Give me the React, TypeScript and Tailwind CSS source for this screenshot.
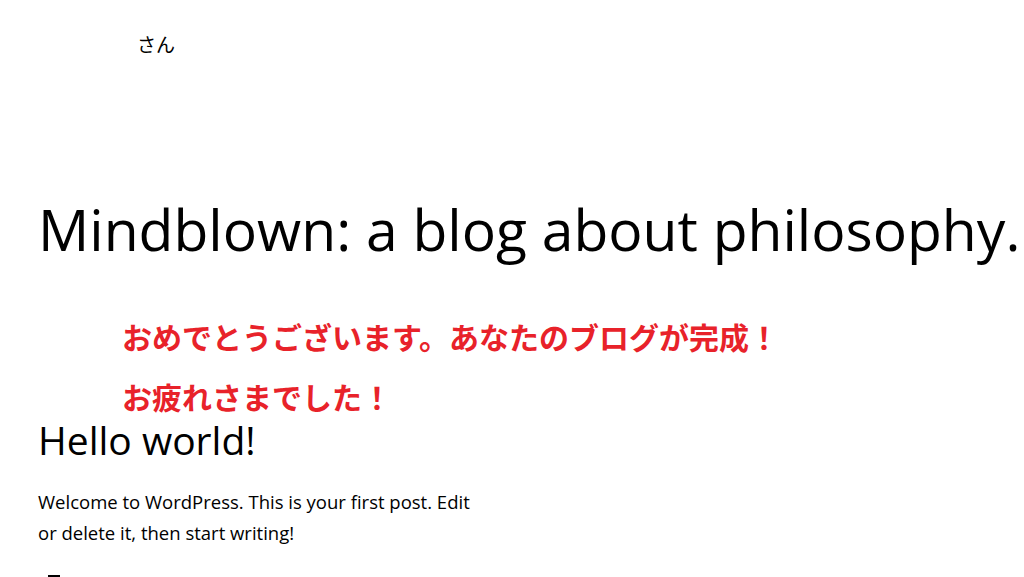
export default function App() {
  return (
    <div className="min-h-[577px] bg-white text-black overflow-hidden font-['Open_Sans','Noto_Sans_CJK_JP',sans-serif]">
      <header className="pl-[137px] pt-[31px]">
        <p className="text-[19px] leading-[28px]">さん</p>
      </header>
      <main className="pl-[38px]">
        <h1 className="mt-[134px] text-[57px] leading-[72px] whitespace-nowrap">
          Mindblown: a blog about philosophy.
        </h1>
        <div className="pl-[84px] mt-[52px] flex flex-col gap-[22px] text-[#e8222a] font-bold text-[30px] leading-[38px] font-['Noto_Sans_CJK_JP',sans-serif]">
          <p>おめでとうございます。あなたのブログが完成！</p>
          <p>お疲れさまでした！</p>
        </div>
        <h2 className="mt-[2px] text-[39px] leading-[46px]">Hello world!</h2>
        <p className="mt-[23px] w-[445px] text-[18.5px] leading-[31px]">
          Welcome to WordPress. This is your first post. Edit or delete it, then start writing!
        </p>
        <div className="mt-[27px] ml-[10px] w-[12px] h-[2px] bg-black" />
      </main>
    </div>
  );
}
